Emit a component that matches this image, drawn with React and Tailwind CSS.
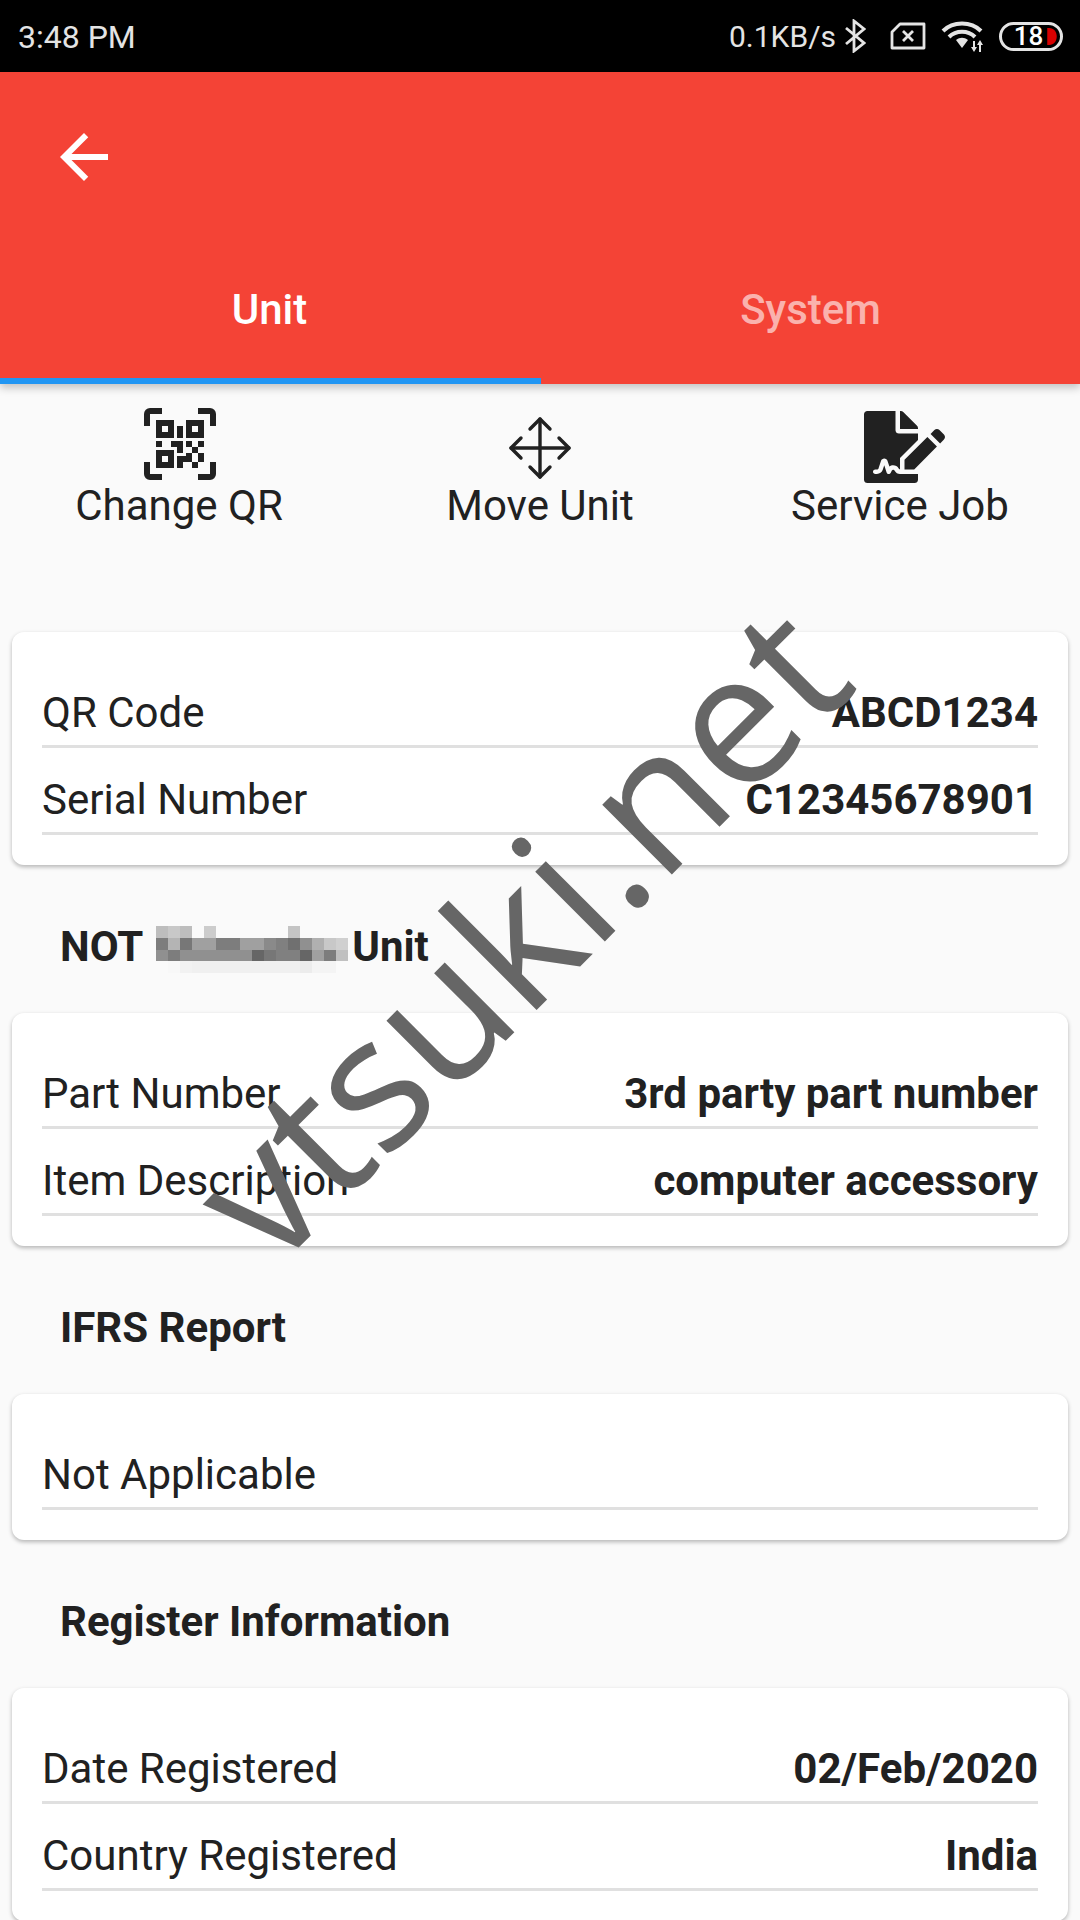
import React from "react";
import { FaFileSignature } from "react-icons/fa";

const mosaic = [
  ["#bdbdbd","#c8c8c8","#bdbdbd","#fafafa","#cccccc","#fafafa","#fafafa","#fafafa","#fafafa","#fafafa","#fafafa","#c4c4c4","#fafafa","#fafafa","#fafafa","#fafafa"],
  ["#7d7d7d","#b4b4b4","#777777","#a0a0a0","#a0a0a0","#7d7d7d","#7d7d7d","#a0a0a0","#a0a0a0","#8a8a8a","#808080","#707070","#909090","#b0b0b0","#c8c8c8","#d0d0d0"],
  ["#909090","#7d7d7d","#909090","#909090","#909090","#909090","#909090","#909090","#666666","#777777","#808080","#808080","#666666","#a0a0a0","#7d7d7d","#c0c0c0"],
  ["#fafafa","#f8f8f8","#f2f2f2","#f0f0f0","#f0f0f0","#f0f0f0","#f0f0f0","#f0f0f0","#f0f0f0","#f0f0f0","#f0f0f0","#f0f0f0","#ececec","#f4f4f4","#f4f4f4","#fafafa"],
];

function Row({ label, value }) {
  return (
    <div className="h-[87px] flex items-end justify-between border-b-[3px] border-[#e0e0e0] pb-[4px] text-[42px] leading-[56px] text-[#212121]">
      <span>{label}</span>
      {value && <span className="font-bold">{value}</span>}
    </div>
  );
}

function Card({ children, h }) {
  return (
    <div className={`mx-3 bg-white rounded-[12px] shadow-[0_2px_4px_rgba(0,0,0,0.28)] px-[30px] pt-[29px] shrink-0 ${h}`}>
      {children}
    </div>
  );
}

function Heading({ children, h }) {
  return (
    <div className={`shrink-0 flex items-center pl-[60px] pt-[14px] text-[42px] font-bold text-[#212121] ${h}`}>{children}</div>
  );
}

function QrIcon() {
  return (
    <svg viewBox="0 0 24 24" className="w-[72px] h-[72px]" fill="#212121">
      <path d="M4,4H10V10H4V4M20,4V10H14V4H20M14,15H16V13H14V11H16V13H18V11H20V13H18V15H20V18H18V20H16V18H13V20H11V16H14V15M16,15V18H18V15H16M4,20V14H10V20H4M6,6V8H8V6H6M16,6V8H18V6H16M6,16V18H8V16H6M4,11H6V13H4V11M9,11H13V15H11V13H9V11M11,6H13V10H11V6M2,2V6H0V2A2,2 0 0,1 2,0H6V2H2M22,0A2,2 0 0,1 24,2V6H22V2H18V0H22M2,18V22H6V24H2A2,2 0 0,1 0,22V18H2M22,22V18H24V22A2,2 0 0,1 22,24H18V22H22Z" />
    </svg>
  );
}

function MoveIcon() {
  return (
    <svg viewBox="0 0 64 64" className="w-[64px] h-[64px]" fill="none" stroke="#212121" strokeWidth="3.4" strokeLinecap="round" strokeLinejoin="round">
      <path d="M32 3V61M3 32H61" />
      <path d="M22 13L32 3L42 13M22 51L32 61L42 51M13 22L3 32L13 42M51 22L61 32L51 42" />
    </svg>
  );
}

export default function App() {
  return (
    <div className="relative w-[1080px] h-[1920px] overflow-hidden bg-[#fafafa] flex flex-col font-['Roboto',sans-serif]">
      <div className="h-[72px] shrink-0 bg-black flex items-center justify-between pl-[18px] pr-[17px] text-[32px] text-[#e4e4e4]">
        <span className="mt-[2px]">3:48 PM</span>
        <div className="flex items-center">
          <span className="text-[30px]">0.1KB/s</span>
          <svg viewBox="0 0 22 34" className="w-[22px] h-[34px] ml-[8px] mt-[-1px]" fill="none" stroke="#e4e4e4" strokeWidth="2.8">
            <path d="M2 9L20 24L10 32V2L20 10L2 25" />
          </svg>
          <svg viewBox="0 0 36 28" className="w-[36px] h-[28px] ml-[24px]" fill="none" stroke="#e4e4e4" strokeWidth="2.8" strokeLinejoin="round">
            <path d="M10 2H34V26H2V10Z" />
            <path d="M13 9L23 19M23 9L13 19" />
          </svg>
          <svg viewBox="0 0 44 32" className="w-[44px] h-[32px] ml-[15px]" fill="none" stroke="#e4e4e4" strokeWidth="4">
            <path d="M2 11C12 1 30 1 40 11M8 17C15 10 27 10 34 17" />
            <path d="M15 20C19 17 23 17 27 20L21 28Z" fill="#e4e4e4" stroke="none" />
            <path d="M33 21V28M39 25V32" strokeWidth="2" />
            <path d="M30 27H36L33 32ZM36 25H42L39 20Z" fill="#e4e4e4" stroke="none" />
          </svg>
          <div className="relative ml-[14px] w-[64px] h-[29px] rounded-[15px] border-[3px] border-[#e4e4e4] flex items-center justify-center">
            <span className="text-[26px] leading-none font-medium text-white ml-[-5px]">18</span>
            <svg viewBox="0 0 10 18" className="absolute right-[2px] top-[3px] w-[12px] h-[17px]" fill="#d80000">
              <path d="M0 0H2C7 0 10 4 10 9S7 18 2 18H0Z" />
            </svg>
          </div>
        </div>
      </div>

      <div className="h-[312px] shrink-0 bg-[#f44336] shadow-[0_4px_8px_rgba(0,0,0,0.22)] flex flex-col relative z-10">
        <div className="h-[192px] pl-[48px] pt-[49px]">
          <svg viewBox="0 0 24 24" className="w-[72px] h-[72px]" fill="#fff">
            <path d="M20 11H7.83l5.59-5.59L12 4l-8 8 8 8 1.41-1.41L7.83 13H20v-2z" />
          </svg>
        </div>
        <div className="flex flex-1 text-[42px] font-medium">
          <div className="relative flex-1 flex items-start justify-center pt-[14px] pr-[2px] text-white">
            Unit
            <div className="absolute left-0 right-0 bottom-0 h-[6px] bg-[#2196f3]" />
          </div>
          <div className="flex-1 flex items-start justify-center pt-[14px] text-white/60">System</div>
        </div>
      </div>

      <div className="h-[248px] shrink-0 grid grid-cols-3 pt-[24px] text-[42px] leading-[46px] text-[#212121] text-center">
        <div className="flex flex-col items-center">
          <QrIcon />
          <span className="mt-[3px] mr-[2px]">Change QR</span>
        </div>
        <div className="flex flex-col items-center pt-[8px]">
          <MoveIcon />
          <span className="mt-[3px]">Move Unit</span>
        </div>
        <div className="flex flex-col items-center">
          <FaFileSignature className="w-[81px] h-[72px] ml-[8px] mt-[3px] text-[#212121]" />
          <span>Service Job</span>
        </div>
      </div>

      <Card h="h-[233px]">
        <Row label="QR Code" value="ABCD1234" />
        <Row label="Serial Number" value="C12345678901" />
      </Card>
      <Heading h="h-[148px]">
        <span>NOT</span>
        <svg viewBox="0 0 16 4" className="w-[192px] h-[47px] ml-[13px] mr-[4px] mt-[6px]" preserveAspectRatio="none" shapeRendering="crispEdges">
          {mosaic.map((r, y) => r.map((c, x) => <rect key={x + "-" + y} x={x} y={y} width="1" height="1" fill={c} />))}
        </svg>
        <span>Unit</span>
      </Heading>
      <Card h="h-[233px]">
        <Row label="Part Number" value="3rd party part number" />
        <Row label="Item Description" value="computer accessory" />
      </Card>
      <Heading h="h-[148px]">IFRS Report</Heading>
      <Card h="h-[146px]">
        <Row label="Not Applicable" />
      </Card>
      <Heading h="h-[148px]">Register Information</Heading>
      <Card h="h-[233px]">
        <Row label="Date Registered" value="02/Feb/2020" />
        <Row label="Country Registered" value="India" />
      </Card>

      <div className="absolute left-[516px] top-[930px] -translate-x-1/2 -translate-y-1/2 -rotate-45 whitespace-nowrap z-20 text-[184px] leading-none font-medium text-[#666666] font-['Open_Sans',sans-serif]">
        vtsuki.net
      </div>
    </div>
  );
}
